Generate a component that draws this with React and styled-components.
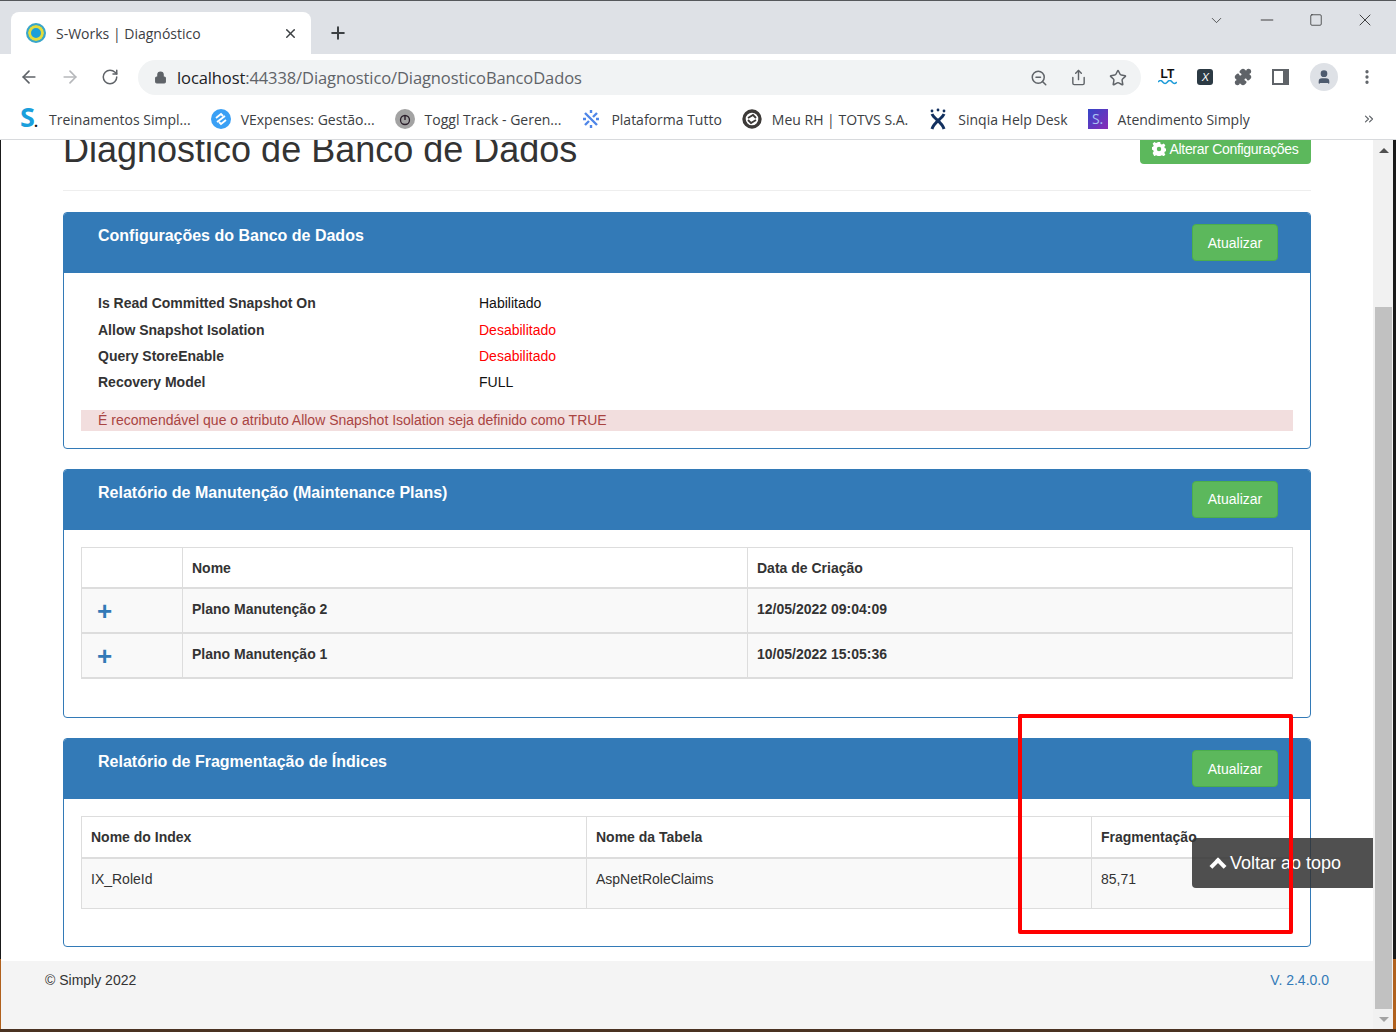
import styled, { createGlobalStyle } from "styled-components";
import { ArrowLeft, ArrowRight, RotateCw, Lock, Plus, X, ZoomOut, Share, Star, Puzzle, MoreVertical, ChevronDown, Minus, Square, User, ChevronsRight } from "lucide-react";

function SIcon() {
    return <BigS>S<i>.</i></BigS>;
}

function TuttoIcon() {
    return (
        <svg width="20" height="20" viewBox="0 0 20 20" fill="none" stroke="#4f86e8" strokeWidth="2.4">
            <path d="M4 4l12 12M16 4l-4 4M8 12l-4 4M2 10h3M15 10h3M10 1v3M10 16v3" />
        </svg>
    );
}

function SinqiaIcon() {
    return (
        <svg width="20" height="22" viewBox="0 0 20 22" fill="none" stroke="#12305f" strokeWidth="3">
            <path d="M4 6c2 5 10 8 12 15M16 6C14 11 6 14 4 21" />
            <circle cx="10" cy="2" r="1.4" fill="#12305f" stroke="none" />
            <circle cx="4" cy="3" r="1.4" fill="#12305f" stroke="none" />
            <circle cx="16" cy="3" r="1.4" fill="#12305f" stroke="none" />
        </svg>
    );
}

function VExpensesIcon() {
    return (
        <svg width="20" height="20" viewBox="0 0 20 20" fill="none">
            <circle cx="10" cy="10" r="10" fill="#3aa0f5" />
            <path d="M5 9l5-4 2 2M15 11l-5 4-2-2M6 13l8-6" stroke="#fff" strokeWidth="1.8" />
        </svg>
    );
}

function TogglIcon() {
    return (
        <svg width="20" height="20" viewBox="0 0 20 20" fill="none">
            <circle cx="10" cy="10" r="10" fill="#a3a3a3" />
            <circle cx="10" cy="11" r="4.5" stroke="#2b1f2b" strokeWidth="1.3" />
            <path d="M10 6v5" stroke="#2b1f2b" strokeWidth="1.4" />
        </svg>
    );
}

function TotvsIcon() {
    return (
        <svg width="20" height="20" viewBox="0 0 20 20" fill="none">
            <circle cx="10" cy="10" r="8" stroke="#3d3a38" strokeWidth="3.4" />
            <path d="M6 9l5-3 3 3M14 11l-5 3-3-3" stroke="#3d3a38" strokeWidth="1.8" />
        </svg>
    );
}

function LtLogo() {
    return (
        <LtIcon>
            LT
            <svg width="19" height="5" viewBox="0 0 19 5" fill="none" stroke="#1e9bd8" strokeWidth="1.6">
                <path d="M0 2c2-2 3-2 4.700 0s3 2 4.700 0 3-2 4.700 0 3 2 4.700 0" />
            </svg>
        </LtIcon>
    );
}

function Gear() {
    return (
        <svg width="14" height="14" viewBox="0 0 14 14">
            <path
                fill="#fff"
                fillRule="evenodd"
                d="M5.800 0h2.400l.4 2 1.400.6 1.700-1.100 1.700 1.700-1.100 1.700.6 1.400 2 .4v2.400l-2 .4-.6 1.400 1.100 1.700-1.700 1.700-1.700-1.100-1.400.6-.4 2H5.800l-.4-2-1.400-.6-1.700 1.100L.6 11.100l1.100-1.700-.6-1.400-2-.4V5.200l2-.4.6-1.400L.6 1.700 2.300 0l1.700 1.100 1.400-.6zM7 4.800a2.200 2.200 0 100 4.400 2.200 2.200 0 000-4.400z"
            />
        </svg>
    );
}

export default function App() {
    const bookmarks = [
        { label: "Treinamentos Simpl...", icon: <SIcon /> },
        { label: "VExpenses: Gestão...", icon: <VExpensesIcon /> },
        { label: "Toggl Track - Geren...", icon: <TogglIcon /> },
        { label: "Plataforma Tutto", icon: <TuttoIcon /> },
        { label: "Meu RH | TOTVS S.A.", icon: <TotvsIcon /> },
        { label: "Sinqia Help Desk", icon: <SinqiaIcon /> },
        { label: "Atendimento Simply", icon: <SquareS>S.</SquareS> },
    ];

    return (
        <>
            <GlobalStyle />
            <Window>
                <TabStrip>
                    <Tab>
                        <Favicon />
                        <span>S-Works | Diagnóstico</span>
                        <X size={15} strokeWidth={2.4} color="#3c4043" />
                    </Tab>
                    <NewTab><Plus size={20} strokeWidth={2.4} color="#3c4043" /></NewTab>
                    <WindowButtons>
                        <ChevronDown size={17} strokeWidth={1} />
                        <Minus size={20} strokeWidth={1} />
                        <Square size={14} strokeWidth={1.2} />
                        <X size={20} strokeWidth={1} />
                    </WindowButtons>
                </TabStrip>
                <Toolbar>
                    <ArrowLeft size={20} color="#5f6368" strokeWidth={2} />
                    <ArrowRight size={20} color="#b6b8bb" strokeWidth={2} />
                    <RotateCw size={18} color="#5f6368" strokeWidth={2} />
                    <Omnibox>
                        <Lock size={13} color="#5f6368" fill="#5f6368" />
                        <Url>localhost<span>:44338/Diagnostico/DiagnosticoBancoDados</span></Url>
                        <ZoomOut size={18} color="#5f6368" />
                        <Share size={17} color="#5f6368" />
                        <Star size={18} color="#5f6368" strokeWidth={2} />
                    </Omnibox>
                    <Extensions>
                        <LtLogo />
                        <XBadge>X</XBadge>
                        <Puzzle size={18} color="#5f6368" fill="#5f6368" />
                        <SidePanel />
                        <Avatar><User size={16} fill="#4e5b6e" color="#4e5b6e" /></Avatar>
                        <MoreVertical size={18} color="#5f6368" strokeWidth={2.4} />
                    </Extensions>
                </Toolbar>
                <Bookmarks>
                    {bookmarks.map((b) => (
                        <Bookmark key={b.label}>
                            <BookmarkIcon>{b.icon}</BookmarkIcon>
                            {b.label}
                        </Bookmark>
                    ))}
                    <More><ChevronsRight size={14} color="#5f6368" /></More>
                </Bookmarks>
                <Viewport>
                    <Page>
                        <Container>
                            <PageHeader>
                                <h1>Diagnóstico de Banco de Dados</h1>
                                <ConfigButton><Gear /> Alterar Configurações</ConfigButton>
                            </PageHeader>

                            <Panel>
                                <PanelHeading>
                                    <h3>Configurações do Banco de Dados</h3>
                                    <UpdateButton>Atualizar</UpdateButton>
                                </PanelHeading>
                                <PanelBody $pb={17}>
                                    <Settings>
                                        <dt>Is Read Committed Snapshot On</dt>
                                        <Value>Habilitado</Value>
                                        <dt>Allow Snapshot Isolation</dt>
                                        <Value $off>Desabilitado</Value>
                                        <dt>Query StoreEnable</dt>
                                        <Value $off>Desabilitado</Value>
                                        <dt>Recovery Model</dt>
                                        <Value>FULL</Value>
                                    </Settings>
                                    <Warning>É recomendável que o atributo Allow Snapshot Isolation seja definido como TRUE</Warning>
                                </PanelBody>
                            </Panel>

                            <Panel>
                                <PanelHeading>
                                    <h3>Relatório de Manutenção (Maintenance Plans)</h3>
                                    <UpdateButton>Atualizar</UpdateButton>
                                </PanelHeading>
                                <PanelBody $pb={38}>
                                    <Table>
                                        <colgroup>
                                            <col width="101" />
                                            <col width="565" />
                                            <col />
                                        </colgroup>
                                        <thead>
                                            <tr><th></th><th>Nome</th><th>Data de Criação</th></tr>
                                        </thead>
                                        <tbody>
                                            <PlanRow>
                                                <td><Expand>+</Expand></td>
                                                <th>Plano Manutenção 2</th>
                                                <th>12/05/2022 09:04:09</th>
                                            </PlanRow>
                                            <PlanRow>
                                                <td><Expand>+</Expand></td>
                                                <th>Plano Manutenção 1</th>
                                                <th>10/05/2022 15:05:36</th>
                                            </PlanRow>
                                        </tbody>
                                    </Table>
                                </PanelBody>
                            </Panel>

                            <Panel>
                                <PanelHeading>
                                    <h3>Relatório de Fragmentação de Índices</h3>
                                    <UpdateButton>Atualizar</UpdateButton>
                                </PanelHeading>
                                <PanelBody $pb={37}>
                                    <Table>
                                        <colgroup>
                                            <col width="505" />
                                            <col width="505" />
                                            <col />
                                        </colgroup>
                                        <thead>
                                            <tr><th>Nome do Index</th><th>Nome da Tabela</th><th>Fragmentação</th></tr>
                                        </thead>
                                        <tbody>
                                            <IndexRow>
                                                <td>IX_RoleId</td>
                                                <td>AspNetRoleClaims</td>
                                                <td>85,71</td>
                                            </IndexRow>
                                        </tbody>
                                    </Table>
                                </PanelBody>
                            </Panel>
                        </Container>
                        <Footer>
                            <span>© Simply 2022</span>
                            <Version>V. 2.4.0.0</Version>
                        </Footer>
                    </Page>
                    <Scrollbar>
                        <Arrow $up />
                        <Track><Thumb /></Track>
                        <Arrow />
                    </Scrollbar>
                    <BackToTop><Caret />Voltar ao topo</BackToTop>
                    <Annotation />
                </Viewport>
            </Window>
        </>
    );
}

const GlobalStyle = createGlobalStyle`
    html, body {
        margin: 0;
        height: 100%;
        overflow: hidden;
        background: #fff;
    }

    * {
        box-sizing: border-box;
    }
`;

const Window = styled.div`
    width: 1396px;
    height: 1032px;
    display: flex;
    flex-direction: column;
    font-family: "Liberation Sans", Arial, sans-serif;
    overflow: hidden;
    border-top: 1px solid #55585b;
    border-bottom: 3px solid #4a3222;
`;

const TabStrip = styled.div`
    height: 53px;
    flex: none;
    display: flex;
    align-items: flex-end;
    padding-left: 11px;
    background: #dee1e6;
`;

const Tab = styled.div`
    width: 300px;
    height: 42px;
    display: flex;
    align-items: center;
    gap: 10px;
    padding: 0 13px 0 15px;
    background: #fff;
    border-radius: 8px 8px 0 0;
    font-family: "Open Sans", sans-serif;
    font-size: 14px;
    color: #3c4043;

    span {
        flex: 1;
    }
`;

const Favicon = styled.div`
    width: 20px;
    height: 20px;
    border-radius: 50%;
    background: #1b9fd8;
    border: 2px solid #3aa6c9;
    box-shadow: inset 0 0 0 3px #e3dc3c;
`;

const NewTab = styled.div`
    width: 38px;
    height: 42px;
    margin-left: 8px;
    display: flex;
    align-items: center;
    justify-content: center;
`;

const WindowButtons = styled.div`
    margin-left: auto;
    align-self: flex-start;
    height: 38px;
    width: 204px;
    display: flex;
    align-items: center;
    justify-content: space-between;
    padding: 0 21px 0 16px;
    color: #1f1f1f;
`;

const Toolbar = styled.div`
    height: 45px;
    flex: none;
    display: flex;
    align-items: center;
    padding: 0 20px 0 19px;
    gap: 21px;
    background: #fff;
`;

const Omnibox = styled.div`
    width: 1003px;
    height: 35px;
    margin-left: -2px;
    margin-top: 2px;
    display: flex;
    align-items: center;
    gap: 22px;
    padding: 0 14px 0 16px;
    border-radius: 18px;
    background: #f1f3f4;
`;

const Url = styled.div`
    flex: 1;
    margin-left: -12px;
    font-family: "Open Sans", sans-serif;
    font-size: 16.5px;
    color: #202124;
    letter-spacing: -0.1px;

    span {
        color: #5f6368;
    }
`;

const Extensions = styled.div`
    flex: 1;
    display: flex;
    align-items: center;
    justify-content: space-between;
    margin-left: -4px;
`;

const LtIcon = styled.div`
    width: 19px;
    font-size: 12px;
    font-weight: 700;
    color: #111;
    line-height: 11px;
    text-align: center;

    svg {
        display: block;
    }
`;

const XBadge = styled.div`
    width: 16px;
    height: 16px;
    border-radius: 3px;
    background: #2c3a44;
    color: #fff;
    font-size: 11px;
    font-style: italic;
    line-height: 16px;
    text-align: center;
`;

const SidePanel = styled.div`
    width: 17px;
    height: 16px;
    border: 2px solid #5f6368;
    border-right-width: 6px;
`;

const Avatar = styled.div`
    width: 28px;
    height: 28px;
    border-radius: 50%;
    background: #dee1e6;
    display: flex;
    align-items: center;
    justify-content: center;
`;

const Bookmarks = styled.div`
    height: 41px;
    flex: none;
    display: flex;
    align-items: center;
    gap: 20px;
    padding: 0 20px 0 19px;
    background: #fff;
    border-bottom: 1px solid #d8dadd;
`;

const Bookmark = styled.div`
    display: flex;
    align-items: center;
    gap: 10px;
    font-family: "Open Sans", sans-serif;
    font-size: 14px;
    color: #3c4043;
    white-space: nowrap;
`;

const BookmarkIcon = styled.div`
    width: 20px;
    height: 22px;
    display: flex;
    align-items: center;
    justify-content: center;
`;

const BigS = styled.div`
    font-size: 27px;
    font-weight: 700;
    color: #1a9fdc;
    line-height: 22px;

    i {
        color: #111;
        font-size: 14px;
        font-style: normal;
        margin-left: -1px;
    }
`;

const SquareS = styled.div`
    width: 20px;
    height: 20px;
    background: linear-gradient(135deg, #3346c8, #8a2bb8);
    color: #a9c3f5;
    font-size: 14px;
    line-height: 20px;
    text-align: center;
`;

const More = styled.div`
    margin-left: auto;
    display: flex;
`;

const Viewport = styled.div`
    flex: 1;
    min-height: 0;
    position: relative;
    display: flex;
    background: #fff;
    border-left: 1px solid #3a3a3a;
    border-right: 3px solid #1a1a1a;
    border-image: linear-gradient(#1a1a1a 92%, #b0601c 92%) 1;
    overflow: hidden;
`;

const Page = styled.div`
    flex: 1;
    min-width: 0;
    display: flex;
    flex-direction: column;
`;

const Container = styled.div`
    padding: 0 62px;
    flex: none;
    height: 821px;
`;

const PageHeader = styled.div`
    height: 51px;
    margin-bottom: 21px;
    display: flex;
    justify-content: space-between;
    border-bottom: 1px solid #eee;
    overflow: hidden;

    h1 {
        margin: -10px 0 0;
        font-size: 36px;
        font-weight: 400;
        line-height: 40px;
        color: #333;
    }
`;

const ConfigButton = styled.button`
    width: 171px;
    height: 24px;
    padding: 0 0 6px;
    border: none;
    border-radius: 0 0 4px 4px;
    background: #5cb85c;
    color: #fff;
    font-family: inherit;
    font-size: 14px;
    letter-spacing: -0.3px;
    display: flex;
    align-items: center;
    justify-content: center;
    gap: 3px;
`;

const Panel = styled.section`
    margin-bottom: 20px;
    border: 1px solid #337ab7;
    border-radius: 4px;
    overflow: hidden;
`;

const PanelHeading = styled.div`
    height: 60px;
    display: flex;
    justify-content: space-between;
    align-items: flex-start;
    padding: 11px 32px 0 34px;
    background: #337ab7;

    h3 {
        margin: 3px 0 0;
        font-size: 16px;
        font-weight: 700;
        line-height: 18px;
        color: #fff;
    }
`;

const UpdateButton = styled.button`
    width: 86px;
    height: 37px;
    border: 1px solid #4cae4c;
    border-radius: 4px;
    background: #5cb85c;
    color: #fff;
    font-family: inherit;
    font-size: 14px;
`;

const PanelBody = styled.div`
    padding: 17px 17px ${(p) => p.$pb}px;
    font-size: 14px;
    color: #333;
`;

const Settings = styled.dl`
    margin: 0 0 14px;
    padding-left: 17px;
    display: grid;
    grid-template-columns: 381px 1fr;
    grid-auto-rows: 26.4px;
    align-items: center;
    line-height: 20px;

    dt {
        font-weight: 700;
    }

    dd {
        margin: 0;
    }
`;

const Value = styled.dd`
    color: ${(p) => (p.$off ? "#ff0000" : "#111")};
`;

const Warning = styled.div`
    height: 21px;
    padding-left: 17px;
    line-height: 20px;
    background: #f2dede;
    color: #a94442;
`;

const Table = styled.table`
    width: 100%;
    table-layout: fixed;
    border-collapse: collapse;
    border: 1px solid #ddd;
    line-height: 20px;

    th, td {
        border: 1px solid #ddd;
        padding: 8px 9px;
        text-align: left;
        vertical-align: top;
    }

    thead th {
        height: 41px;
        padding-top: 10px;
        border-bottom-width: 2px;
    }
`;

const PlanRow = styled.tr`
    height: 45px;
    background: #f9f9f9;

    th, td {
        border-bottom-width: 2px;
        padding-top: 10px;
    }
`;

const IndexRow = styled.tr`
    height: 51px;
    background: #f9f9f9;

    td {
        padding-top: 10px;
    }
`;

const Expand = styled.span`
    display: block;
    margin: 2px 0 0 6px;
    font-size: 26px;
    font-weight: 700;
    line-height: 20px;
    color: #337ab7;
`;

const Footer = styled.footer`
    flex: 1;
    display: flex;
    justify-content: space-between;
    padding: 9px 44px 0 44px;
    background: #f4f4f4;
    font-size: 14px;
    line-height: 20px;
    color: #333;
`;

const Version = styled.span`
    color: #337ab7;
`;

const Scrollbar = styled.div`
    width: 20px;
    flex: none;
    display: flex;
    flex-direction: column;
    padding: 0 1px 0 2px;
    background: #f1f1f1;
`;

const Arrow = styled.div`
    height: 20px;
    flex: none;
    display: flex;
    align-items: center;
    justify-content: center;

    &::after {
        content: "";
        border-left: 5px solid transparent;
        border-right: 5px solid transparent;
        ${(p) => (p.$up ? "border-bottom: 5px solid #505050;" : "border-top: 5px solid #a3a3a3;")}
    }
`;

const Track = styled.div`
    flex: 1;
    display: flex;
    flex-direction: column;
    justify-content: flex-end;
`;

const Thumb = styled.div`
    height: 702px;
    background: #c1c1c1;
`;

const BackToTop = styled.div`
    position: absolute;
    left: 1191px;
    top: 698px;
    width: 181px;
    height: 50px;
    display: flex;
    align-items: center;
    gap: 6px;
    padding-left: 20px;
    border-radius: 4px 0 0 4px;
    background: rgba(51, 51, 51, 0.86);
    color: #fff;
    font-size: 18px;
`;

const Caret = styled.span`
    width: 12px;
    height: 12px;
    margin-top: 6px;
    border-left: 4px solid #fff;
    border-top: 4px solid #fff;
    transform: rotate(45deg);
`;

const Annotation = styled.div`
    position: absolute;
    left: 1017px;
    top: 574px;
    width: 275px;
    height: 220px;
    border: 4px solid #ff0000;
    border-radius: 2px;
`;
